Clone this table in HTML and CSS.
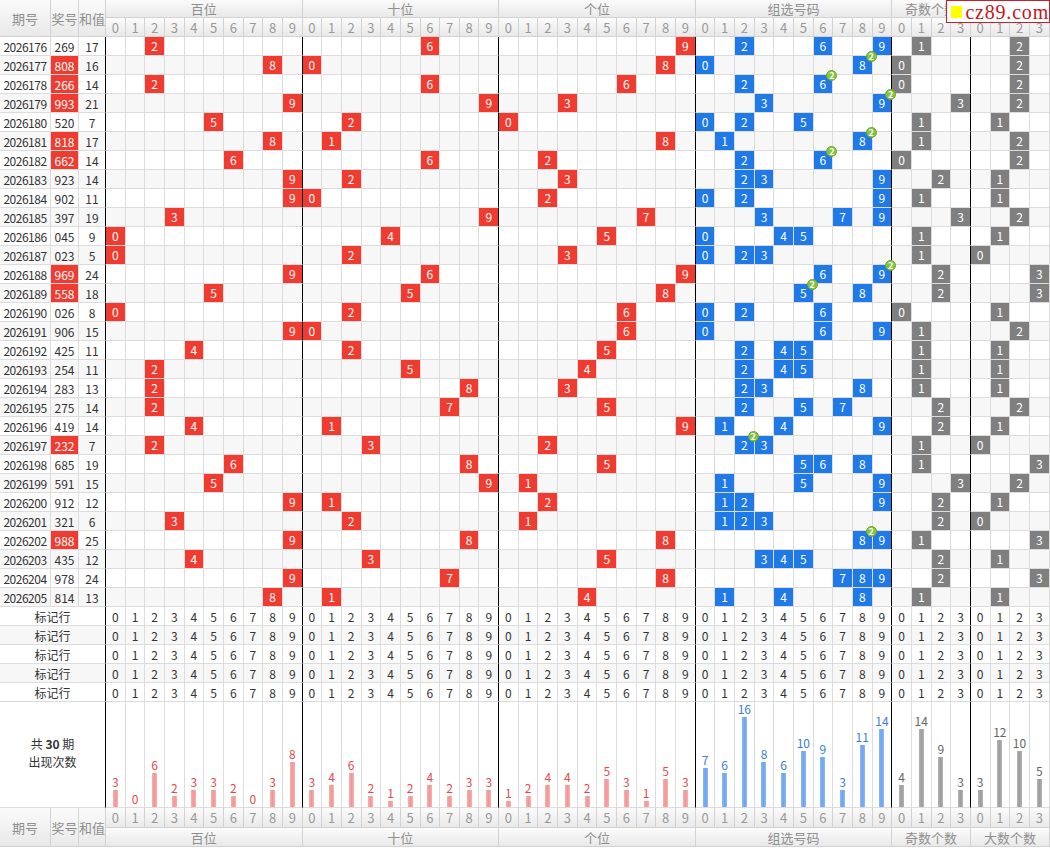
FILE: index.html
```html
<!DOCTYPE html>
<html lang="zh-CN">
<head>
<meta charset="utf-8">
<title>排列三 走势图</title>
<link rel="stylesheet" href="styles.css">
</head>
<body>
<div class="wrap">
  <table class="chart">
    <colgroup id="cols"></colgroup>
    <thead>
      <tr class="h1">
        <th rowspan="2" class="hl">期号</th>
        <th rowspan="2" class="hl">奖号</th>
        <th rowspan="2" class="hl">和值</th>
        <th colspan="10">百位</th>
        <th colspan="10">十位</th>
        <th colspan="10">个位</th>
        <th colspan="10">组选号码</th>
        <th colspan="4">奇数个数</th>
        <th colspan="4">大数个数</th>
      </tr>
      <tr class="h2" id="hdigits"></tr>
    </thead>
    <tbody id="body"></tbody>
    <tfoot>
      <tr class="h2" id="fdigits">
        <th rowspan="2" class="hl">期号</th>
        <th rowspan="2" class="hl">奖号</th>
        <th rowspan="2" class="hl">和值</th>
      </tr>
      <tr class="h1 f1">
        <th colspan="10">百位</th>
        <th colspan="10">十位</th>
        <th colspan="10">个位</th>
        <th colspan="10">组选号码</th>
        <th colspan="4">奇数个数</th>
        <th colspan="4">大数个数</th>
      </tr>
    </tfoot>
  </table>
  <div class="logo"><span class="logo-sq"></span><span class="logo-tx">cz89.com</span></div>
</div>
<script src="script.js"></script>
</body>
</html>
```
FILE: styles.css
```css
* { box-sizing: border-box; }
body {
  margin: 0;
  background: #fff;
  color: #333;
  font-family: "Noto Sans CJK SC", "Noto Sans", sans-serif;
  font-size: 12px;
}
.wrap { position: relative; width: 1050px; }
.chart {
  border-collapse: separate;
  border-spacing: 0;
  table-layout: fixed;
  width: 1050px;
}
.chart th, .chart td {
  padding: 0;
  text-align: center;
  vertical-align: middle;
  font-weight: normal;
  white-space: nowrap;
  border-right: 1px solid #dcdcdc;
  border-bottom: 1px solid #dcdcdc;
  height: 19px;
  line-height: 17px;
}
.chart th {
  background: linear-gradient(#fbfbfb, #e9e9e9);
  color: #9a9a9a;
  border-color: #d2d2d2;
}
.chart .h1 th { height: 18px; font-size: 13px; color: #8f8f8f; }
.chart .h2 th { height: 19px; font-size: 13px; }
.chart th.hl { font-size: 13px; color: #8f8f8f; }
.chart tfoot .h2 th { height: 20px; }
.chart tfoot .f1 th { height: 19px; }

.chart td { background: #fff; }
.chart tr.alt td { background: #f7f7f7; }
.chart td.ge { border-right-color: #000; }
.chart td.qh { font-size: 12px; letter-spacing: -0.5px; }
.chart td.jh.z3 { background: #f03c30; color: #fff; }
.chart tr.alt td.jh.z3 { background: #f03c30; }

.b {
  position: relative;
  display: block;
  height: 18px;
  line-height: 18px;
  color: #fff;
  font-size: 12px;
}
.b.r { background: #f03c30; }
.b.bl { background: #1f7ae8; }
.b.gr { background: #7f7f7f; }
.badge {
  position: absolute;
  top: -5px;
  right: -5px;
  z-index: 3;
  width: 11px;
  height: 11px;
  border-radius: 50%;
  background: #86c440;
  border: 1px solid #6aa828;
  color: #fff;
  font-style: normal;
  font-size: 9px;
  font-weight: bold;
  line-height: 9px;
  text-align: center;
}

.chart td.lbl { color: #333; }
.chart td.cnt {
  height: 106px;
  vertical-align: bottom;
  background: #fff;
}
.barbox {
  display: flex;
  flex-direction: column;
  align-items: center;
  justify-content: flex-end;
  height: 105px;
}
.num { font-size: 12px; line-height: 14px; margin-bottom: 1px; }
.bar { width: 5px; }
.c-r .num { color: #e24a4e; }
.c-r .bar { background: linear-gradient(90deg, #f7b0b0, #f59595, #f7b0b0); }
.c-bl .num { color: #3a7ed6; }
.c-bl .bar { background: linear-gradient(90deg, #8cb8f7, #6ea5f2, #8cb8f7); }
.c-gr .num { color: #666; }
.c-gr .bar { background: linear-gradient(90deg, #b3b3b3, #9e9e9e, #b3b3b3); }
.chart td.tot {
  height: 106px;
  color: #333;
  line-height: 18px;
  padding-bottom: 4px;
}
.tot b { font-weight: bold; }

.logo {
  position: absolute;
  top: 0;
  right: 0;
  width: 104px;
  height: 23px;
  background: #fff;
  border: 1px solid #c8202a;
  display: flex;
  align-items: center;
  padding-left: 4px;
}
.logo-sq {
  width: 12px;
  height: 12px;
  background: #ffff00;
  margin-right: 3px;
}
.logo-tx {
  font-family: "Liberation Serif", serif;
  font-size: 20px;
  letter-spacing: 0.8px;
  color: #c8141e;
  line-height: 20px;
}
```
FILE: script.js
```js
(function () {
  var draws = ['269','808','266','993','520','818','662','923','902','397','045','023','969','558','026','906','425','254','283','275','419','232','685','591','912','321','988','435','978','814'];
  var start = 2026176;
  var groups = [
    { n: 10, c: 'r' }, { n: 10, c: 'r' }, { n: 10, c: 'r' },
    { n: 10, c: 'bl' }, { n: 4, c: 'gr' }, { n: 4, c: 'gr' }
  ];
  var counts = [];
  for (var z = 0; z < 48; z++) counts.push(0);

  var cols = '<col style="width:51px"><col style="width:28px"><col style="width:27px">';
  for (var c = 0; c < 48; c++) cols += '<col>';
  document.getElementById('cols').innerHTML = cols;

  function digitHeads() {
    var h = '';
    groups.forEach(function (g) {
      for (var k = 0; k < g.n; k++) h += '<th>' + k + '</th>';
    });
    return h;
  }
  document.getElementById('hdigits').innerHTML = digitHeads();
  document.getElementById('fdigits').insertAdjacentHTML('beforeend', digitHeads());

  var html = '';
  var rowIdx = 0;
  draws.forEach(function (s, i) {
    var d = s.split('').map(Number);
    var sum = d[0] + d[1] + d[2];
    var pair = d[0] === d[1] || d[1] === d[2] || d[0] === d[2];
    var tr = '<tr' + (rowIdx % 2 ? ' class="alt"' : '') + '>';
    tr += '<td class="qh">' + (start + i) + '</td>';
    tr += '<td class="jh' + (pair ? ' z3' : '') + '">' + s + '</td>';
    tr += '<td class="ge">' + sum + '</td>';
    var off = 0;
    for (var p = 0; p < 3; p++) {
      for (var k = 0; k < 10; k++) {
        var inner = '';
        if (d[p] === k) { inner = '<span class="b r">' + k + '</span>'; counts[off + k]++; }
        tr += '<td' + (k === 9 ? ' class="ge"' : '') + '>' + inner + '</td>';
      }
      off += 10;
    }
    for (var k2 = 0; k2 < 10; k2++) {
      var cnt = d.filter(function (x) { return x === k2; }).length;
      var in2 = '';
      if (cnt > 0) {
        in2 = '<span class="b bl">' + k2 + (cnt === 2 ? '<i class="badge">2</i>' : '') + '</span>';
        counts[30 + k2] += cnt;
      }
      tr += '<td' + (k2 === 9 ? ' class="ge"' : '') + '>' + in2 + '</td>';
    }
    var odd = d.filter(function (x) { return x % 2 === 1; }).length;
    var big = d.filter(function (x) { return x >= 5; }).length;
    for (var k3 = 0; k3 < 4; k3++) {
      var in3 = '';
      if (odd === k3) { in3 = '<span class="b gr">' + k3 + '</span>'; counts[40 + k3]++; }
      tr += '<td' + (k3 === 3 ? ' class="ge"' : '') + '>' + in3 + '</td>';
    }
    for (var k4 = 0; k4 < 4; k4++) {
      var in4 = '';
      if (big === k4) { in4 = '<span class="b gr">' + k4 + '</span>'; counts[44 + k4]++; }
      tr += '<td>' + in4 + '</td>';
    }
    tr += '</tr>';
    html += tr;
    rowIdx++;
  });

  for (var m = 0; m < 5; m++) {
    var t = '<tr' + (rowIdx % 2 ? ' class="alt"' : '') + '><td colspan="3" class="ge lbl">标记行</td>';
    groups.forEach(function (g, gi) {
      for (var k = 0; k < g.n; k++) {
        var cls = (k === g.n - 1 && gi < 5) ? ' class="ge"' : '';
        t += '<td' + cls + '>' + k + '</td>';
      }
    });
    t += '</tr>';
    html += t;
    rowIdx++;
  }

  var cr = '<tr><td colspan="3" class="ge tot">共 <b>30</b> 期<br>出现次数</td>';
  var idx = 0;
  groups.forEach(function (g, gi) {
    for (var k = 0; k < g.n; k++) {
      var v = counts[idx];
      var cls = 'cnt c-' + g.c + ((k === g.n - 1 && gi < 5) ? ' ge' : '');
      cr += '<td class="' + cls + '"><div class="barbox"><span class="num">' + v + '</span>' +
        '<div class="bar" style="height:' + (v * 5.6).toFixed(1) + 'px"></div></div></td>';
      idx++;
    }
  });
  cr += '</tr>';
  html += cr;

  document.getElementById('body').innerHTML = html;
})();
```
